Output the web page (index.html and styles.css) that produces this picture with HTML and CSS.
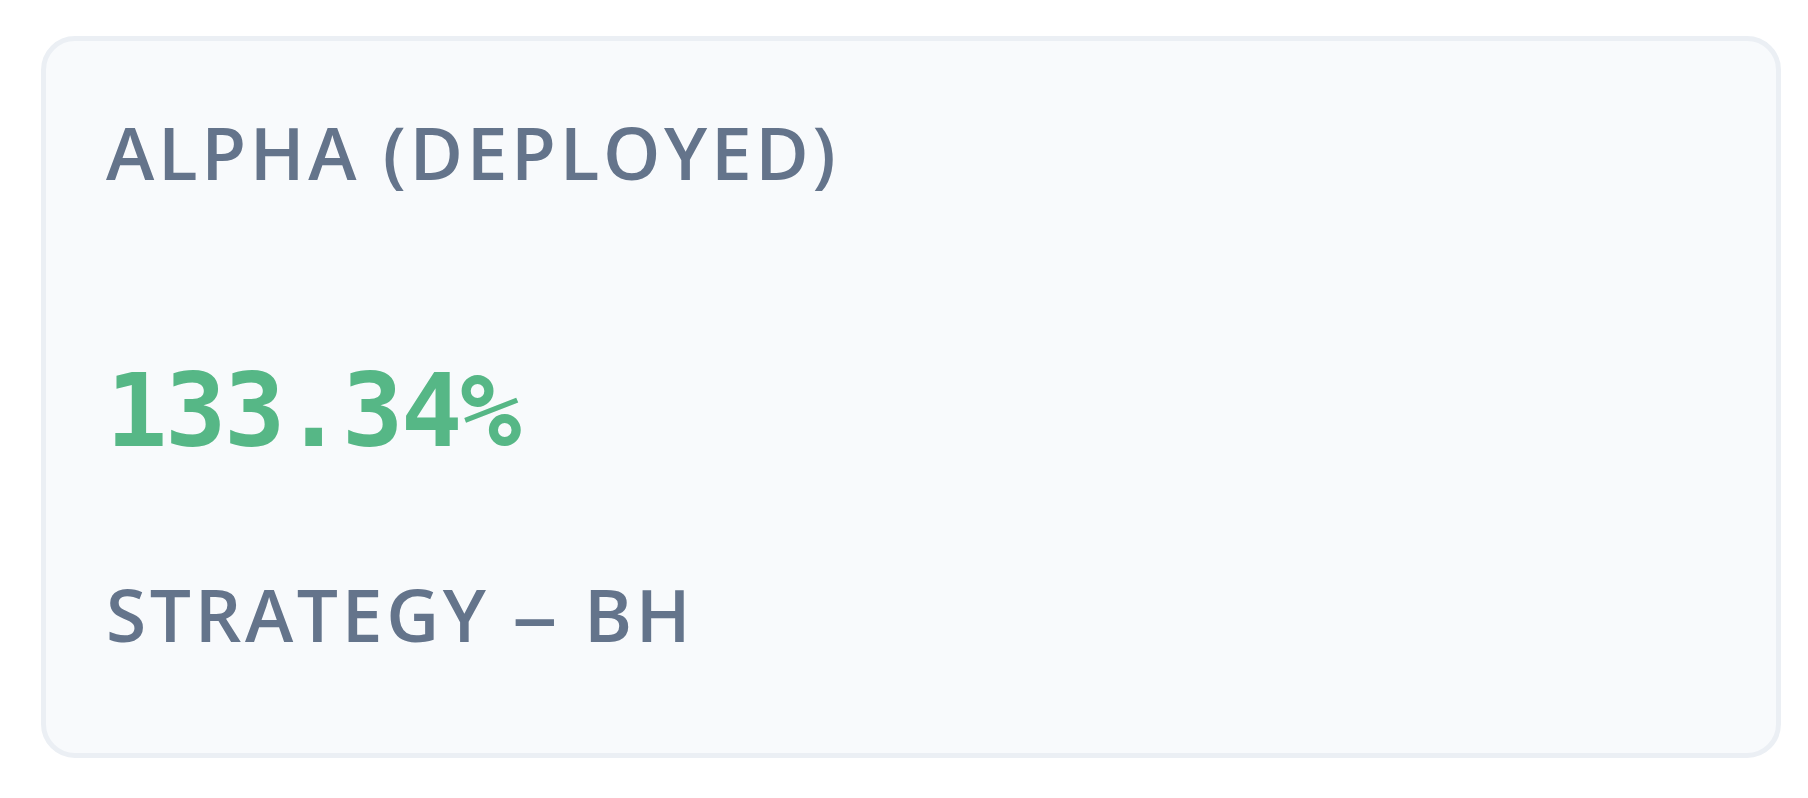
FILE: index.html
```html
<!DOCTYPE html>
<html lang="en">
  <head>
    <meta charset="UTF-8" />
    <meta name="viewport" content="width=device-width, initial-scale=1" />
    <title>Alpha</title>
    <link rel="stylesheet" href="styles.css">
  </head>
  <body>
    <!-- single stat card -->
    <div class="card">
      <div class="label">Alpha (Deployed)</div>
      <div class="value">133.34%</div>
      <div class="label sub">Strategy <span class="dash">–</span> BH</div>
    </div>
  </body>
</html>
```

FILE: styles.css
```css
html,
body {
  height: 100%;
}
body {
  font-family: "Open Sans", "Noto Sans", sans-serif;
  margin: 0;
  padding: 36px 27px 40px 41px;
  box-sizing: border-box;
  background: #ffffff;
  color: #64748b;
}
.card {
  display: flex;
  flex-direction: column;
  height: 100%;
  box-sizing: border-box;
  background: #f8fafc;
  border: 5px solid #ebeff4;
  border-radius: 34px;
  padding: 74px 60px 103px;
}
.label {
  font-size: 73px;
  line-height: 1;
  font-weight: 600;
  letter-spacing: 0.05em;
  text-transform: uppercase;
  white-space: nowrap;
}
.value {
  margin-top: 172px;
  font-family: "DejaVu Sans Mono", monospace;
  font-size: 102px;
  line-height: 1;
  font-weight: bold;
  letter-spacing: -2.4px;
  color: #56b786;
}
.label.sub {
  margin-top: 115px;
}
/* Gedankenstrich etwas breiter als in Open Sans */
.label .dash {
  display: inline-block;
  margin: 0 4px 0 5px;
  transform: scaleX(1.25);
}
```
